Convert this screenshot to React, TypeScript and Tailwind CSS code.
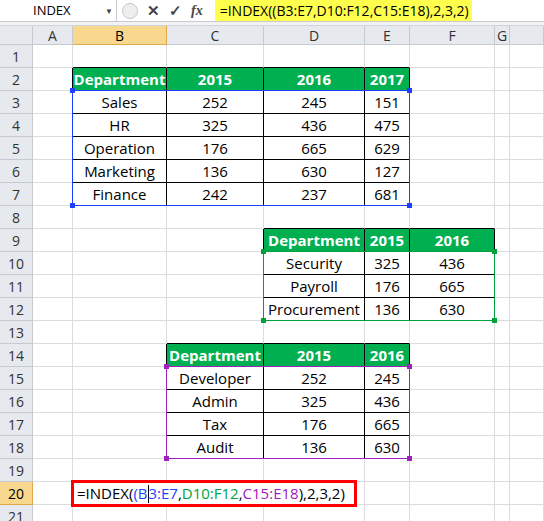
import React from "react";

const W = [33, 40, 94, 97, 101, 45, 85, 15, 34];
const LETTERS = ["", "A", "B", "C", "D", "E", "F", "G", ""];
const RH = 23;
const TOP = 45;

const data: Record<string, string> = {};
const put = (r: number, c: number, rows: string[][]) =>
  rows.forEach((row, i) => row.forEach((v, j) => (data[`${r + i},${c + j}`] = v)));
put(2, 2, [
  ["Department", "2015", "2016", "2017"],
  ["Sales", "252", "245", "151"],
  ["HR", "325", "436", "475"],
  ["Operation", "176", "665", "629"],
  ["Marketing", "136", "630", "127"],
  ["Finance", "242", "237", "681"],
]);
put(9, 4, [
  ["Department", "2015", "2016"],
  ["Security", "325", "436"],
  ["Payroll", "176", "665"],
  ["Procurement", "136", "630"],
]);
put(14, 3, [
  ["Department", "2015", "2016"],
  ["Developer", "252", "245"],
  ["Admin", "325", "436"],
  ["Tax", "176", "665"],
  ["Audit", "136", "630"],
]);
const tables = [
  { r0: 2, r1: 7, c0: 2, c1: 5 },
  { r0: 9, r1: 12, c0: 4, c1: 6 },
  { r0: 14, r1: 18, c0: 3, c1: 5 },
];
const inT = (r: number, c: number) => tables.some((t) => r >= t.r0 && r <= t.r1 && c >= t.c0 && c <= t.c1);
const isHead = (r: number, c: number) => tables.some((t) => r === t.r0 && c >= t.c0 && c <= t.c1);

const xOf = (c: number) => W.slice(0, c).reduce((a, b) => a + b, 0);
const yOf = (r: number) => TOP + (r - 1) * RH;

function Range({ r0, r1, c0, c1, color }: { r0: number; r1: number; c0: number; c1: number; color: string }) {
  const x = xOf(c0) - 1, y = yOf(r0) - 1, w = xOf(c1 + 1) - xOf(c0) + 1, h = (r1 - r0 + 1) * RH + 1;
  return (
    <div className="absolute pointer-events-none" style={{ left: x, top: y, width: w, height: h, border: `1px solid ${color}` }}>
      {[[-3, -3], [w - 4, -3], [-3, h - 4], [w - 4, h - 4]].map(([l, t], i) => (
        <div key={i} className="absolute w-[5px] h-[5px]" style={{ left: l, top: t, background: color }} />
      ))}
    </div>
  );
}

export default function App() {
  const rows = Array.from({ length: 21 }, (_, i) => i + 1);
  return (
    <div className="relative w-[544px] h-[521px] overflow-hidden bg-white text-[15px] text-black" style={{ fontFamily: '"Open Sans", "Liberation Sans", Arial, sans-serif' }}>
      <div className="flex h-[22px] items-center border-b border-[#c6cbd2] bg-white">
        <div className="flex h-full w-[117px] items-center justify-between border-r border-[#c6cbd2] pl-[33px] pr-[3px] text-[13px]">
          <span>INDEX</span>
          <span className="text-[8px] text-[#444]">▼</span>
        </div>
        <div className="flex h-full items-center gap-[9px] pl-[5px] pr-[8px]">
          <div className="h-[16px] w-[16px] rounded-full border border-[#c8c8c8] bg-[#eee]" />
          <span className="text-[15px] font-bold text-[#444]">✕</span>
          <span className="text-[15px] font-bold text-[#444]">✓</span>
          <span className="text-[14px] italic font-bold text-[#444]" style={{ fontFamily: '"Liberation Serif", serif' }}>fx</span>
        </div>
        <div className="ml-[4px] flex h-full items-center bg-[#ffff4d] pl-[5px] pr-[3px] text-[14px]">=INDEX((B3:E7,D10:F12,C15:E18),2,3,2)</div>
      </div>
      <div className="h-[4px] bg-[#f3f3f3] border-b border-[#d0d4da]" />
      <div className="flex h-[19px]">
        {W.map((w, c) => (
          <div key={c} style={{ width: w }}
            className={`flex items-center justify-center border-r border-b text-[14px] ${c === 2 ? "bg-[#f8d88e] border-[#e2a949] border-b-[#e2a949]" : "bg-[#e6e9ee] border-[#c5cad1] text-[#333]"}`}>
            {LETTERS[c]}
          </div>
        ))}
      </div>
      {rows.map((r) => (
        <div key={r} className="flex" style={{ height: RH }}>
          {W.map((w, c) => {
            if (c === 0)
              return (
                <div key={c} style={{ width: w }}
                  className={`flex items-center justify-center border-r border-b text-[14px] ${r === 20 ? "bg-[#f8d88e] border-[#e2a949]" : "bg-[#e6e9ee] border-[#c5cad1] text-[#333]"}`}>
                  {r}
                </div>
              );
            const t = inT(r, c);
            const rb = t || inT(r, c + 1);
            const bb = t || inT(r + 1, c);
            const head = isHead(r, c);
            return (
              <div key={c} style={{ width: w }}
                className={`flex items-center justify-center whitespace-nowrap border-r border-b ${rb ? "border-r-black" : "border-r-[#dadcdd]"} ${bb ? "border-b-black" : "border-b-[#dadcdd]"} ${head ? "bg-[#00b050] font-bold text-white" : ""}`}>
                {data[`${r},${c}`] ?? ""}
              </div>
            );
          })}
        </div>
      ))}
      <Range r0={3} r1={7} c0={2} c1={5} color="#1f3fff" />
      <Range r0={10} r1={12} c0={4} c1={6} color="#00a03c" />
      <Range r0={15} r1={18} c0={3} c1={5} color="#a020c0" />
      <div className="absolute left-[71px] top-[480px] flex h-[27px] w-[286px] items-center border-[3px] border-[#ff0000] bg-white pl-[3px] text-[15px]">
        <span>=INDEX(</span>
        <span className="text-[#1f3fff]">(B</span>
        <span className="inline-block h-[18px] w-px bg-black" />
        <span className="text-[#1f3fff]">3:E7</span>
        <span>,</span>
        <span className="text-[#00a03c]">D10:F12</span>
        <span>,</span>
        <span className="text-[#a020c0]">C15:E18</span>
        <span>),2,3,2)</span>
      </div>
    </div>
  );
}
